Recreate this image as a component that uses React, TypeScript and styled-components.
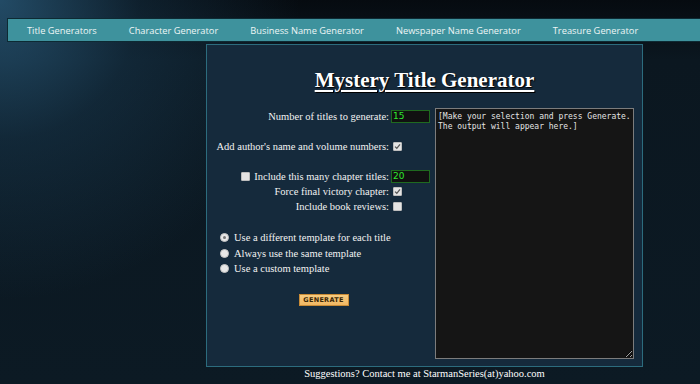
import React from "react";
import styled, { createGlobalStyle } from "styled-components";

const GlobalStyle = createGlobalStyle`
  html, body {
    margin: 0;
    padding: 0;
    height: 100%;
    overflow: hidden;
  }
  body {
    background:
      radial-gradient(circle at 0 0, rgba(44, 96, 130, 0.75) 0, rgba(30, 70, 98, 0.35) 140px, rgba(12, 26, 36, 0) 300px),
      linear-gradient(to bottom, #060b10 0, #0b1720 60px, #0c1a24 100%);
    font-family: "Liberation Serif", "Times New Roman", serif;
    color: #f2f2f2;
  }
`;

const Page = styled.div`
  width: 700px;
  height: 384px;
  padding-top: 18px;
  box-sizing: border-box;
  overflow: hidden;
`;

const Nav = styled.ul`
  box-sizing: border-box;
  display: flex;
  margin: 0 0 0 7px;
  padding: 0 0 0 3px;
  list-style: none;
  width: 693px;
  height: 24px;
  align-items: center;
  background: #3e929d;
  border: 1px solid #0d2a33;
  border-right: none;
`;

const NavItem = styled.li`
  padding: 0 16px;
  font-family: "Open Sans", "Liberation Sans", sans-serif;
  font-size: 9.3px;
  color: #eef6f6;
  white-space: nowrap;
`;

const Column = styled.div`
  width: 437px;
  margin: 2px 0 0 206px;
`;

const Panel = styled.div`
  box-sizing: border-box;
  height: 323px;
  border: 1px solid #2c6c7e;
  background: #152a3c;
  padding: 22px 8px 0 12px;
`;

const Title = styled.h1`
  margin: 0 4px 15px 0;
  text-align: center;
  font-size: 21px;
  font-weight: bold;
  text-decoration: underline;
  text-decoration-thickness: 2px;
  text-underline-offset: 3px;
  color: #ffffff;
  text-shadow: 1px 1px 1px #000;
  line-height: 26px;
`;

const Body = styled.div`
  display: flex;
  gap: 5px;
  align-items: flex-start;
`;

const Form = styled.div`
  width: 211px;
  flex-shrink: 0;
  padding-top: 1px;
  font-size: 10.5px;
`;

const Grid = styled.div`
  display: grid;
  grid-template-columns: 170px 41px;
  column-gap: 2px;
`;

const Label = styled.label<{ $gap?: boolean }>`
  display: flex;
  justify-content: flex-end;
  align-items: center;
  gap: 4px;
  height: 15px;
  white-space: nowrap;
  margin-top: ${(p) => (p.$gap ? "15px" : "0")};
`;

const Control = styled.div<{ $gap?: boolean }>`
  display: flex;
  align-items: center;
  height: 15px;
  margin-top: ${(p) => (p.$gap ? "15px" : "0")};
`;

const NumberBox = styled.div`
  box-sizing: border-box;
  width: 39px;
  height: 13px;
  background: #111;
  border: 1px solid #1f6a1f;
  color: #2ee82e;
  font-family: "DejaVu Sans", sans-serif;
  font-size: 9px;
  line-height: 11px;
  padding-left: 1px;
`;

const Box = styled.span`
  box-sizing: border-box;
  display: inline-flex;
  align-items: center;
  justify-content: center;
  width: 9px;
  height: 9px;
  background: #e4e4e4;
  border: 1px solid #bdbdbd;
  border-radius: 1px;
  margin-left: 2px;
`;

const Radios = styled.div`
  margin-top: 16px;
  display: flex;
  flex-direction: column;
`;

const RadioRow = styled.label`
  display: flex;
  align-items: center;
  gap: 5px;
  height: 15.5px;
  white-space: nowrap;
`;

const Dot = styled.span<{ $checked?: boolean }>`
  box-sizing: border-box;
  display: inline-flex;
  align-items: center;
  justify-content: center;
  width: 9px;
  height: 9px;
  border-radius: 50%;
  background: #e8e8e8;
  border: 1px solid #c4c4c4;
  margin-left: 1px;
  &::after {
    content: "";
    display: ${(p) => (p.$checked ? "block" : "none")};
    width: 3px;
    height: 3px;
    border-radius: 50%;
    background: #777;
  }
`;

const ButtonRow = styled.div`
  display: flex;
  justify-content: center;
  margin-top: 17px;
  padding-right: 2px;
`;

const Button = styled.button`
  box-sizing: border-box;
  width: 50px;
  height: 12px;
  padding: 0;
  background: linear-gradient(#f8cc80, #f1b763);
  border: 1px solid #c98b36;
  color: #3a2605;
  font-family: "DejaVu Sans", sans-serif;
  font-weight: bold;
  font-size: 6.5px;
  letter-spacing: 0.3px;
  line-height: 10px;
`;

const Output = styled.textarea`
  box-sizing: border-box;
  width: 200px;
  height: 251px;
  margin: 0;
  resize: both;
  background: #151515;
  border: 1px solid #7c7c7c;
  color: #e4e4e4;
  font-family: "DejaVu Sans Mono", "Liberation Mono", monospace;
  font-size: 8px;
  line-height: 10px;
  padding: 3px 2px;
  outline: none;
`;

const Footer = styled.p`
  margin: 0;
  text-align: center;
  font-size: 10.5px;
  line-height: 13px;
  color: #fff;
`;

const Check = ({ checked }: { checked?: boolean }) => (
  <Box>
    {checked && (
      <svg width="7" height="7" viewBox="0 0 7 7">
        <path d="M1 3.6 L2.8 5.3 L6 1.4" fill="none" stroke="#555" strokeWidth="1.3" />
      </svg>
    )}
  </Box>
);

const navLinks = [
  "Title Generators",
  "Character Generator",
  "Business Name Generator",
  "Newspaper Name Generator",
  "Treasure Generator",
];

export default function App() {
  return (
    <Page>
      <GlobalStyle />
      <Nav>
        {navLinks.map((n) => (
          <NavItem key={n}>{n}</NavItem>
        ))}
      </Nav>
      <Column>
        <Panel>
          <Title>Mystery Title Generator</Title>
          <Body>
            <Form>
              <Grid>
                <Label>Number of titles to generate:</Label>
                <Control>
                  <NumberBox>15</NumberBox>
                </Control>

                <Label $gap>Add author's name and volume numbers:</Label>
                <Control $gap>
                  <Check checked />
                </Control>

                <Label $gap>
                  <Check />
                  Include this many chapter titles:
                </Label>
                <Control $gap>
                  <NumberBox>20</NumberBox>
                </Control>

                <Label>Force final victory chapter:</Label>
                <Control>
                  <Check checked />
                </Control>

                <Label>Include book reviews:</Label>
                <Control>
                  <Check />
                </Control>
              </Grid>

              <Radios>
                <RadioRow>
                  <Dot $checked />
                  Use a different template for each title
                </RadioRow>
                <RadioRow>
                  <Dot />
                  Always use the same template
                </RadioRow>
                <RadioRow>
                  <Dot />
                  Use a custom template
                </RadioRow>
              </Radios>

              <ButtonRow>
                <Button>GENERATE</Button>
              </ButtonRow>
            </Form>
            <Output
              readOnly
              defaultValue={"[Make your selection and press Generate.\nThe output will appear here.]"}
            />
          </Body>
        </Panel>
        <Footer>Suggestions? Contact me at StarmanSeries(at)yahoo.com</Footer>
      </Column>
    </Page>
  );
}
